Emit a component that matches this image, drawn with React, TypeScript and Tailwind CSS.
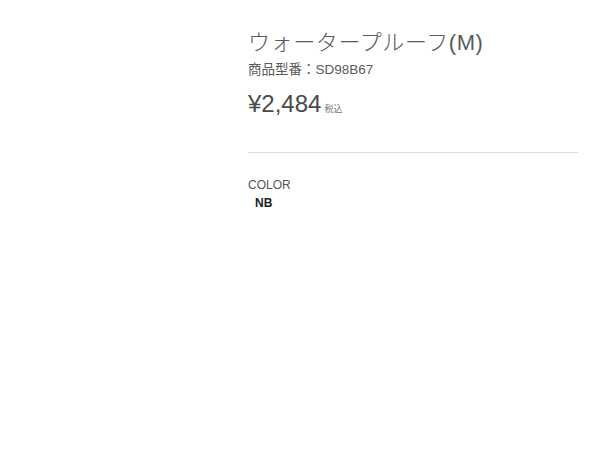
export default function App() {
  return (
    <div
      className="w-[600px] h-[450px] bg-white flex"
      style={{ fontFamily: '"Liberation Sans", "Noto Sans CJK JP", sans-serif' }}
    >
      <div className="w-[248px] shrink-0" />
      <div className="w-[330px] pt-[28px]">
        <h1 className="text-[22px] leading-[30px] text-[#5a5a5a] font-light tracking-[0.6px]">
          ウォータープルーフ(M)
        </h1>
        <p className="text-[13.5px] leading-[18px] text-[#5a5a5a] mt-[3px]">商品型番：SD98B67</p>
        <div className="flex items-baseline mt-[10px]">
          <span className="text-[24px] leading-[30px] text-[#4a4a4a]">¥2,484</span>
          <span className="text-[9px] text-[#777] ml-[3px]">税込</span>
        </div>
        <div className="border-t border-[#dcdcdc] mt-[33px]" />
        <div className="mt-[25px]">
          <p className="text-[12px] leading-[14px] text-[#555]">COLOR</p>
          <p className="text-[12px] leading-[14px] font-bold text-[#222] pl-[7px] mt-[4px]">NB</p>
        </div>
      </div>
    </div>
  );
}
